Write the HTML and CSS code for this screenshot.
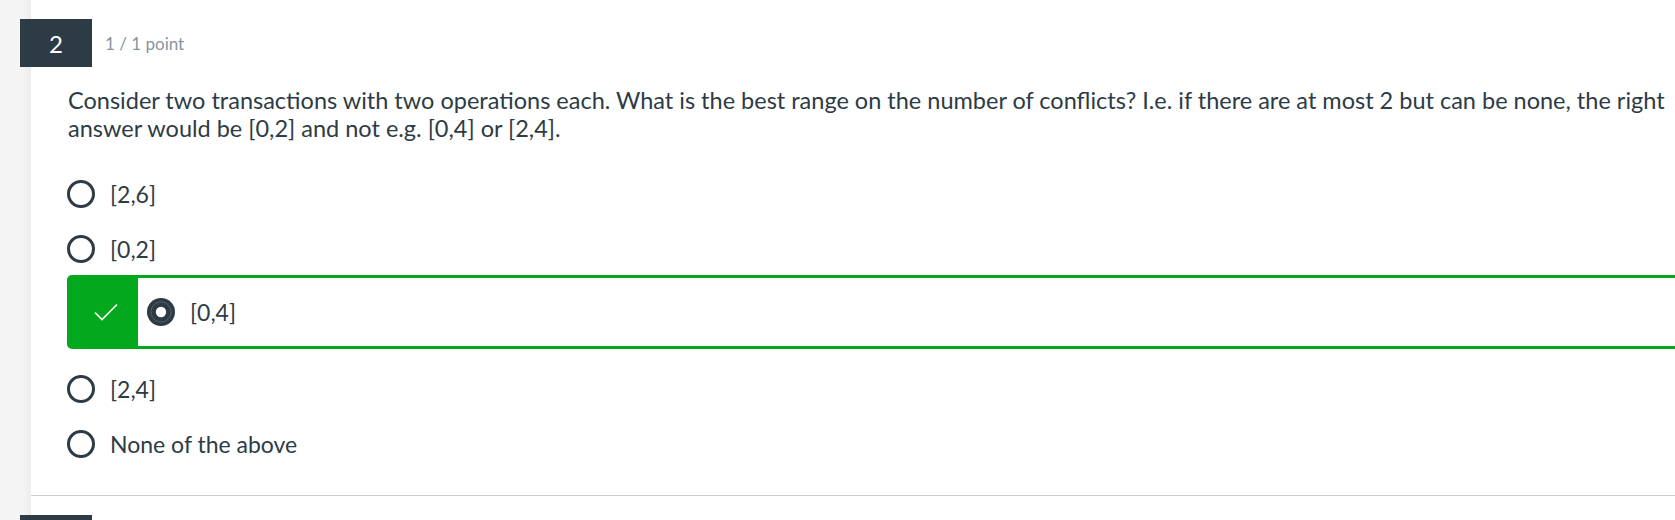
FILE: index.html
```html
<!DOCTYPE html>
<html lang="en">
<head>
<meta charset="utf-8">
<title>Quiz question 2</title>
<link rel="stylesheet" href="styles.css">
</head>
<body>
<div class="page">
  <aside class="rail"></aside>
  <main class="content">
    <section class="question">
      <header class="q-head">
        <span class="q-num">2</span>
        <span class="q-score">1 / 1 point</span>
      </header>
      <p class="q-text">Consider two transactions with two operations each. What is the best range on the number of conflicts? I.e. if there are at most 2 but can be none, the right answer would be [0,2] and not e.g. [0,4] or [2,4].</p>
      <ul class="options">
        <li class="option">
          <svg class="radio" width="28" height="28" viewBox="0 0 28 28"><circle cx="14" cy="14" r="12.5" fill="none" stroke="#2d3b45" stroke-width="3"/></svg>
          <span class="opt-label">[2,6]</span>
        </li>
        <li class="option">
          <svg class="radio" width="28" height="28" viewBox="0 0 28 28"><circle cx="14" cy="14" r="12.5" fill="none" stroke="#2d3b45" stroke-width="3"/></svg>
          <span class="opt-label">[0,2]</span>
        </li>
        <li class="option correct">
          <span class="correct-mark">
            <svg width="24" height="18" viewBox="0 0 24 18"><polyline points="1,9.5 8,16.5 23,1.5" fill="none" stroke="#ffffff" stroke-width="1.6"/></svg>
          </span>
          <svg class="radio" width="28" height="28" viewBox="0 0 28 28"><circle cx="14" cy="14" r="14" fill="#2d3b45"/><circle cx="14" cy="14" r="5.2" fill="#ffffff"/><circle cx="14" cy="14" r="10" fill="none" stroke="#8c959d" stroke-width="0.7" stroke-dasharray="1.2 0.8"/></svg>
          <span class="opt-label">[0,4]</span>
        </li>
        <li class="option">
          <svg class="radio" width="28" height="28" viewBox="0 0 28 28"><circle cx="14" cy="14" r="12.5" fill="none" stroke="#2d3b45" stroke-width="3"/></svg>
          <span class="opt-label">[2,4]</span>
        </li>
        <li class="option">
          <svg class="radio" width="28" height="28" viewBox="0 0 28 28"><circle cx="14" cy="14" r="12.5" fill="none" stroke="#2d3b45" stroke-width="3"/></svg>
          <span class="opt-label">None of the above</span>
        </li>
      </ul>
    </section>
    <section class="question">
      <header class="q-head">
        <span class="q-num"></span>
      </header>
    </section>
  </main>
</div>
</body>
</html>
```

FILE: styles.css
```css
html, body {
  margin: 0;
  padding: 0;
  background: #ffffff;
  overflow: hidden;
}

body {
  font-family: Lato, "Open Sans", "Liberation Sans", sans-serif;
  color: #2d3b45;
}

.page {
  display: flex;
  width: 1720px;
  min-height: 520px;
}

.rail {
  width: 31px;
  flex: 0 0 31px;
  background: linear-gradient(to right, #f4f4f4 0, #f4f4f4 24px, #ececec 31px);
}

.content {
  flex: 1;
  min-width: 0;
}

.question {
  padding: 19px 20px 29px 37px;
  border-bottom: 1px solid #c9ced2;
}

.q-head {
  display: flex;
  align-items: center;
  margin-left: -48px;
  height: 48px;
}

.q-num {
  width: 72px;
  height: 48px;
  background: #2d3b45;
  color: #ffffff;
  display: flex;
  align-items: center;
  justify-content: center;
  font-size: 24px;
}

.q-score {
  margin-left: 13px;
  font-size: 17px;
  color: #8795a1;
}

.q-text {
  margin: 19px 0 0 0;
  font-size: 23.5px;
  line-height: 28px;
}

.options {
  list-style: none;
  margin: 30px 0 0 0;
  padding: 0;
  display: flex;
  flex-direction: column;
  gap: 11px;
}

.option {
  display: flex;
  align-items: center;
  height: 44px;
  margin-left: -1px;
  font-size: 23px;
}

.option .radio {
  flex: 0 0 28px;
}

.opt-label {
  margin-left: 15px;
}

.option.correct {
  height: 74px;
  box-sizing: border-box;
  border: 3px solid #04a81d;
  border-radius: 5px;
  margin-top: -7px;
  margin-bottom: 7px;
  margin-right: -20px;
}

.correct-mark {
  align-self: stretch;
  width: 68px;
  background: #04a81d;
  display: flex;
  align-items: center;
  justify-content: center;
  padding-left: 4px;
  box-sizing: border-box;
  margin-right: 9px;
}
```
